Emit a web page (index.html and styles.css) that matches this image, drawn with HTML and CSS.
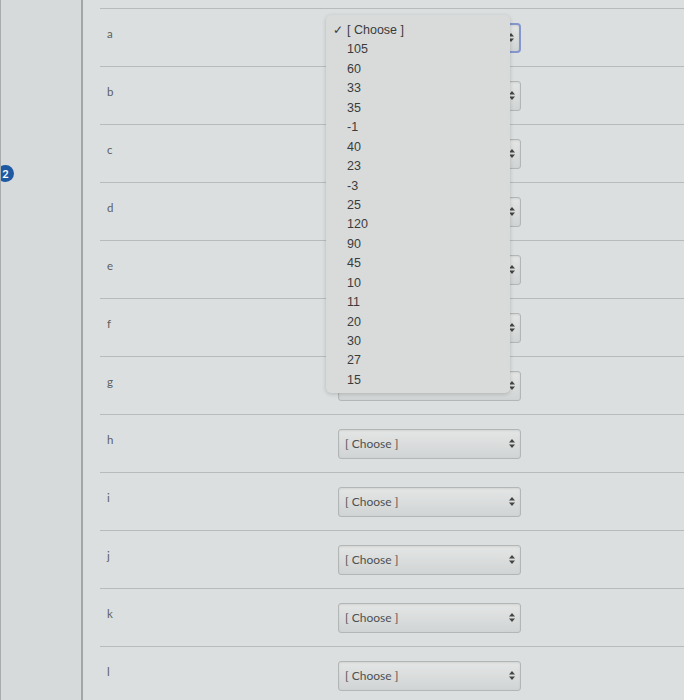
FILE: index.html
```html
<!DOCTYPE html>
<html>
<head>
    <link rel="stylesheet" href="styles.css">
</head>
<body>
    <div class="page">
        <div class="gutter">
            <span class="badge">2</span>
        </div>
        <div class="content">
            <div class="row">
                <div class="label">a</div>
                <div class="select focused covered"><span>[ Choose ]</span><svg class="arrows" width="6" height="9" viewBox="0 0 6 9"><path d="M3 0L6 3.5H0Z M3 9L6 5.5H0Z" fill="#444"/></svg></div>
            </div>
            <div class="row">
                <div class="label">b</div>
                <div class="select covered"><span>[ Choose ]</span><svg class="arrows" width="6" height="9" viewBox="0 0 6 9"><path d="M3 0L6 3.5H0Z M3 9L6 5.5H0Z" fill="#444"/></svg></div>
            </div>
            <div class="row">
                <div class="label">c</div>
                <div class="select covered"><span>[ Choose ]</span><svg class="arrows" width="6" height="9" viewBox="0 0 6 9"><path d="M3 0L6 3.5H0Z M3 9L6 5.5H0Z" fill="#444"/></svg></div>
            </div>
            <div class="row">
                <div class="label">d</div>
                <div class="select covered"><span>[ Choose ]</span><svg class="arrows" width="6" height="9" viewBox="0 0 6 9"><path d="M3 0L6 3.5H0Z M3 9L6 5.5H0Z" fill="#444"/></svg></div>
            </div>
            <div class="row">
                <div class="label">e</div>
                <div class="select covered"><span>[ Choose ]</span><svg class="arrows" width="6" height="9" viewBox="0 0 6 9"><path d="M3 0L6 3.5H0Z M3 9L6 5.5H0Z" fill="#444"/></svg></div>
            </div>
            <div class="row">
                <div class="label">f</div>
                <div class="select covered"><span>[ Choose ]</span><svg class="arrows" width="6" height="9" viewBox="0 0 6 9"><path d="M3 0L6 3.5H0Z M3 9L6 5.5H0Z" fill="#444"/></svg></div>
            </div>
            <div class="row">
                <div class="label">g</div>
                <div class="select covered"><span>[ Choose ]</span><svg class="arrows" width="6" height="9" viewBox="0 0 6 9"><path d="M3 0L6 3.5H0Z M3 9L6 5.5H0Z" fill="#444"/></svg></div>
            </div>
            <div class="row">
                <div class="label">h</div>
                <div class="select"><span>[ Choose ]</span><svg class="arrows" width="6" height="9" viewBox="0 0 6 9"><path d="M3 0L6 3.5H0Z M3 9L6 5.5H0Z" fill="#444"/></svg></div>
            </div>
            <div class="row">
                <div class="label">i</div>
                <div class="select"><span>[ Choose ]</span><svg class="arrows" width="6" height="9" viewBox="0 0 6 9"><path d="M3 0L6 3.5H0Z M3 9L6 5.5H0Z" fill="#444"/></svg></div>
            </div>
            <div class="row">
                <div class="label">j</div>
                <div class="select"><span>[ Choose ]</span><svg class="arrows" width="6" height="9" viewBox="0 0 6 9"><path d="M3 0L6 3.5H0Z M3 9L6 5.5H0Z" fill="#444"/></svg></div>
            </div>
            <div class="row">
                <div class="label">k</div>
                <div class="select"><span>[ Choose ]</span><svg class="arrows" width="6" height="9" viewBox="0 0 6 9"><path d="M3 0L6 3.5H0Z M3 9L6 5.5H0Z" fill="#444"/></svg></div>
            </div>
            <div class="row">
                <div class="label">l</div>
                <div class="select"><span>[ Choose ]</span><svg class="arrows" width="6" height="9" viewBox="0 0 6 9"><path d="M3 0L6 3.5H0Z M3 9L6 5.5H0Z" fill="#444"/></svg></div>
            </div>

            <!-- open dropdown for row a -->
            <ul class="menu">
                <li class="checked">[ Choose ]</li>
                <li>105</li>
                <li>60</li>
                <li>33</li>
                <li>35</li>
                <li>-1</li>
                <li>40</li>
                <li>23</li>
                <li>-3</li>
                <li>25</li>
                <li>120</li>
                <li>90</li>
                <li>45</li>
                <li>10</li>
                <li>11</li>
                <li>20</li>
                <li>30</li>
                <li>27</li>
                <li>15</li>
            </ul>
        </div>
    </div>
</body>
</html>
```

FILE: styles.css
```css
body {
    margin: 0;
    background: #dcdfdf;
    font-family: Lato, "Liberation Sans", sans-serif;
}
.page {
    display: flex;
    height: 700px;
    overflow: hidden;
    border-left: 1px solid #a9acac;
}
.gutter {
    width: 82px;
    border-right: 2px solid #a3a6a6;
    background: #d7dada;
    padding-top: 165px;
    box-sizing: border-box;
    flex-shrink: 0;
}
.badge {
    display: block;
    width: 17px;
    height: 17px;
    margin-left: -4px;
    border-radius: 50%;
    background: #1d5aa3;
    color: #fff;
    font-size: 11px;
    font-weight: bold;
    line-height: 17px;
    text-align: center;
}
.content {
    position: relative;
    flex: 1;
    padding: 8px 0 0 17px;
}
.row {
    display: flex;
    align-items: center;
    height: 57px;
    border-top: 1px solid #b8bbbb;
}
.label {
    width: 238px;
    padding-left: 7px;
    box-sizing: border-box;
    font-size: 11.5px;
    color: #5d6060;
    margin-top: -8px;
}
.select {
    display: flex;
    align-items: center;
    justify-content: space-between;
    width: 183px;
    height: 30px;
    box-sizing: border-box;
    padding: 0 5px 0 6px;
    border: 1px solid #b3b6b6;
    border-radius: 3px;
    background: linear-gradient(#e4e6e6, #d1d4d4);
    box-shadow: inset 0 1px 2px rgba(0,0,0,0.08);
    font-size: 12px;
    color: #4e5151;
}
.select.covered span {
    visibility: hidden;
}
.select.focused {
    border: 2px solid #8596cd;
    border-radius: 4px;
}
.menu {
    position: absolute;
    left: 243px;
    top: 15px;
    width: 184px;
    height: 378px;
    margin: 0;
    padding: 6px 0 0 0;
    box-sizing: border-box;
    list-style: none;
    background: #d9dbdb;
    border-radius: 5px;
    box-shadow: 0 1px 4px rgba(0,0,0,0.18);
    font-family: "Liberation Sans", Arial, sans-serif;
    font-size: 12.5px;
    color: #3a3c3c;
}
.menu li {
    height: 19.45px;
    line-height: 19.45px;
    padding-left: 21px;
}
.menu li.checked {
    position: relative;
}
.menu li.checked::before {
    content: "\2713";
    position: absolute;
    left: 7px;
    font-size: 12px;
}
```
